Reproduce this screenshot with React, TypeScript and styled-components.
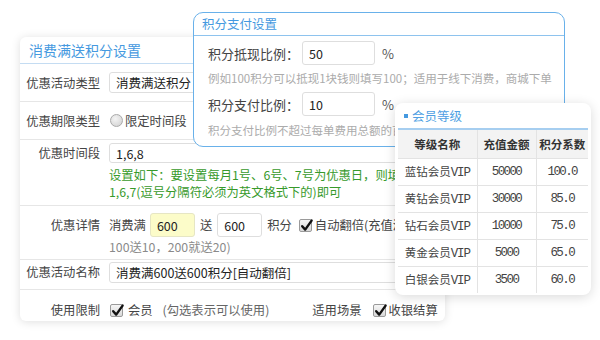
import React from "react";
import styled, { createGlobalStyle } from "styled-components";

const GlobalStyle = createGlobalStyle`
  html, body { margin: 0; padding: 0; background: #fff; }
  body { font-family: "Noto Sans CJK SC", "Noto Sans", sans-serif; color: #333; }
  * { box-sizing: border-box; }
`;

const Canvas = styled.div`
  position: relative;
  width: 600px;
  height: 340px;
  overflow: hidden;
  background: #fff;
`;

/* ---------- main window ---------- */
const MainPanel = styled.section`
  position: absolute;
  left: 20px;
  top: 37px;
  width: 425px;
  height: 284px;
  background: #fff;
  border-radius: 6px;
  box-shadow: 0 1px 10px rgba(0, 0, 0, 0.13);
  overflow: hidden;
  z-index: 1;
  font-size: 12.3px;
`;

const PanelTitle = styled.div`
  height: 27px;
  line-height: 26px;
  padding-left: 9px;
  font-size: 14px;
  color: #4599e0;
  border-bottom: 1px solid #c4dcf2;
`;

const Row = styled.div<{ $h?: number; $align?: string; $pt?: number; $last?: boolean }>`
  display: grid;
  grid-template-columns: 80px 1fr;
  column-gap: 9px;
  height: ${(p) => (p.$h ? `${p.$h}px` : "auto")};
  align-items: ${(p) => p.$align ?? "center"};
  padding-top: ${(p) => p.$pt ?? 0}px;
  border-bottom: ${(p) => (p.$last ? "none" : "1px solid #e6e6e6")};
  white-space: nowrap;
`;

const Label = styled.div<{ $lh?: number }>`
  text-align: right;
  color: #444;
  line-height: ${(p) => p.$lh ?? 20}px;
`;

const Field = styled.div<{ $column?: boolean }>`
  display: flex;
  flex-direction: ${(p) => (p.$column ? "column" : "row")};
  align-items: ${(p) => (p.$column ? "flex-start" : "center")};
  min-width: 0;
`;

const Inline = styled.div<{ $h?: number }>`
  display: flex;
  align-items: center;
  height: ${(p) => p.$h ?? 20}px;
  color: #444;
`;

const TextBox = styled.input<{ $w: number; $h: number; $yellow?: boolean; $ml?: number; $mr?: number }>`
  width: ${(p) => p.$w}px;
  height: ${(p) => p.$h}px;
  margin: 0 ${(p) => p.$mr ?? 0}px 0 ${(p) => p.$ml ?? 0}px;
  padding: 0 6px;
  font: inherit;
  font-size: 12.5px;
  color: #222;
  background: ${(p) => (p.$yellow ? "#fcfcc9" : "#fff")};
  border: 1px solid ${(p) => (p.$yellow ? "#e6e6c4" : "#dedede")};
  border-radius: 3px;
  outline: none;
  flex: none;
`;

const Hint = styled.div<{ $color: string; $mt?: number }>`
  color: ${(p) => p.$color};
  line-height: 17px;
  margin-top: ${(p) => p.$mt ?? 0}px;
`;

const Text = styled.span<{ $ml?: number; $color?: string }>`
  margin-left: ${(p) => p.$ml ?? 0}px;
  color: ${(p) => p.$color ?? "#444"};
  flex: none;
`;

const CheckBox = styled.span<{ $ml?: number }>`
  position: relative;
  display: inline-block;
  width: 13px;
  height: 13px;
  margin-left: ${(p) => p.$ml ?? 0}px;
  border: 1px solid #9a9a9a;
  border-radius: 2px;
  background: linear-gradient(#f6f6f6, #d9d9d9);
  flex: none;
  svg {
    position: absolute;
    left: 0px;
    top: -2px;
  }
`;

const Radio = styled.span<{ $ml?: number }>`
  display: inline-block;
  width: 13px;
  height: 13px;
  margin-left: ${(p) => p.$ml ?? 0}px;
  border: 1px solid #aaa;
  border-radius: 50%;
  background: radial-gradient(circle at 40% 35%, #f4f4f4, #cfcfcf);
  flex: none;
`;

const Check = ({ ml }: { ml?: number }) => (
  <CheckBox $ml={ml}>
    <svg width="14" height="15" viewBox="0 0 14 15">
      <path d="M2.2 8.2 L5.2 11.6 L11.6 2.6" fill="none" stroke="#111" strokeWidth="2.4" strokeLinecap="round" strokeLinejoin="round" />
    </svg>
  </CheckBox>
);

/* ---------- points payment window ---------- */
const PayWindow = styled.section`
  position: absolute;
  left: 193px;
  top: 12px;
  width: 372px;
  height: 135px;
  background: #fff;
  border: 1.5px solid #69b1ea;
  border-radius: 10px;
  overflow: hidden;
  z-index: 2;
  white-space: nowrap;
`;

const PayTitle = styled.div`
  height: 23px;
  line-height: 22px;
  padding-left: 8px;
  font-size: 12.5px;
  color: #4599e0;
  border-bottom: 1px solid #8ec3ee;
`;

const PayBody = styled.div`
  display: flex;
  flex-direction: column;
  padding: 5px 0 0 14px;
`;

const PayLine = styled.div<{ $mt?: number }>`
  display: flex;
  align-items: center;
  height: 24px;
  margin-top: ${(p) => p.$mt ?? 0}px;
  font-size: 13px;
  color: #444;
`;

const PayHint = styled.div<{ $mt: number }>`
  height: 16px;
  line-height: 16px;
  margin-top: ${(p) => p.$mt}px;
  font-size: 11.5px;
  color: #ababab;
`;

/* ---------- member level window ---------- */
const LevelWindow = styled.section`
  position: absolute;
  left: 395px;
  top: 103px;
  width: 196px;
  height: 192px;
  padding: 0 3px;
  background: #fff;
  border-radius: 8px;
  box-shadow: 0 2px 12px rgba(0, 0, 0, 0.15);
  z-index: 3;
`;

const LevelTitle = styled.div`
  display: flex;
  align-items: center;
  gap: 4px;
  height: 27px;
  padding-left: 6px;
  font-size: 12.5px;
  color: #4f9fe3;
  border-bottom: 2px solid #a6cef0;
`;

const Square = styled.span`
  width: 4px;
  height: 4px;
  background: #4599e0;
`;

const Table = styled.table`
  width: 190px;
  border-collapse: collapse;
  table-layout: fixed;
`;

const Th = styled.th<{ $w: number }>`
  width: ${(p) => p.$w}px;
  height: 28px;
  padding: 0;
  background: #f3f3f3;
  font-size: 11.5px;
  font-weight: 600;
  color: #333;
  text-align: center;
  border-left: 1px solid #e3e3e3;
  &:first-child { border-left: none; }
`;

const Td = styled.td<{ $num?: boolean }>`
  height: 27px;
  padding: 0;
  text-align: center;
  font-family: ${(p) => (p.$num ? `"Liberation Mono", monospace` : `"Noto Sans CJK SC", sans-serif`)};
  font-size: ${(p) => (p.$num ? 12.5 : 11.5)}px;
  letter-spacing: ${(p) => (p.$num ? "-1.6px" : "0")};
  color: #444;
  border-top: 1px solid #e3e3e3;
  border-left: 1px solid #e3e3e3;
  &:first-child { border-left: none; }
`;

const Vip = styled.span`
  font-family: "Liberation Mono", monospace;
  font-size: 12.5px;
  letter-spacing: -1.2px;
`;

const levels = [
  { name: "蓝钻会员", amount: "50000", rate: "100.0" },
  { name: "黄钻会员", amount: "30000", rate: "85.0" },
  { name: "钻石会员", amount: "10000", rate: "75.0" },
  { name: "黄金会员", amount: "5000", rate: "65.0" },
  { name: "白银会员", amount: "3500", rate: "60.0" },
];

export default function App() {
  return (
    <>
      <GlobalStyle />
      <Canvas>
        <MainPanel>
          <PanelTitle>消费满送积分设置</PanelTitle>
          <Row $h={38}>
            <Label>优惠活动类型</Label>
            <Field>
              <TextBox $w={300} $h={21} readOnly value="消费满送积分" />
            </Field>
          </Row>
          <Row $h={38}>
            <Label>优惠期限类型</Label>
            <Field>
              <Radio $ml={1} />
              <Text $ml={2}>限定时间段</Text>
            </Field>
          </Row>
          <Row $h={66} $align="start" $pt={3}>
            <Label>优惠时间段</Label>
            <Field $column>
              <TextBox $w={300} $h={20} readOnly value="1,6,8" />
              <Hint $color="#379a2b" $mt={3.5}>设置如下：要设置每月1号、6号、7号为优惠日，则填</Hint>
              <Hint $color="#379a2b">1,6,7(逗号分隔符必须为英文格式下的)即可</Hint>
            </Field>
          </Row>
          <Row $h={54} $align="start" $pt={7}>
            <Label $lh={24}>优惠详情</Label>
            <Field $column>
              <Inline $h={24}>
                <Text>消费满</Text>
                <TextBox $w={45} $h={24} $yellow $ml={4} readOnly value="600" />
                <Text $ml={5}>送</Text>
                <TextBox $w={45} $h={24} $ml={5} readOnly value="600" />
                <Text $ml={5}>积分</Text>
                <Check ml={7} />
                <Text $ml={3}>自动翻倍(充值满</Text>
              </Inline>
              <Hint $color="#8a8a8a" $mt={1.5}>100送10，200就送20)</Hint>
            </Field>
          </Row>
          <Row $h={30} $align="start" $pt={2}>
            <Label $lh={21}>优惠活动名称</Label>
            <Field>
              <TextBox $w={310} $h={21} readOnly value="消费满600送600积分[自动翻倍]" />
            </Field>
          </Row>
          <Row $align="start" $pt={10} $last>
            <Label>使用限制</Label>
            <Field>
              <Inline>
                <Check ml={1} />
                <Text $ml={5}>会员</Text>
                <Text $ml={10} $color="#666">(勾选表示可以使用)</Text>
                <Text $ml={43}>适用场景</Text>
                <Check ml={11} />
                <Text $ml={3}>收银结算</Text>
              </Inline>
            </Field>
          </Row>
        </MainPanel>

        <PayWindow>
          <PayTitle>积分支付设置</PayTitle>
          <PayBody>
            <PayLine>
              <span>积分抵现比例：</span>
              <TextBox $w={73} $h={24} $ml={3} readOnly value="50" />
              <Text $ml={7} $color="#555">%</Text>
            </PayLine>
            <PayHint $mt={5}>例如100积分可以抵现1块钱则填写100；适用于线下消费，商城下单</PayHint>
            <PayLine $mt={6}>
              <span>积分支付比例：</span>
              <TextBox $w={73} $h={24} $ml={3} readOnly value="10" />
              <Text $ml={7} $color="#555">%</Text>
            </PayLine>
            <PayHint $mt={6}>积分支付比例不超过每单费用总额的百分比</PayHint>
          </PayBody>
        </PayWindow>

        <LevelWindow>
          <LevelTitle>
            <Square />
            <span>会员等级</span>
          </LevelTitle>
          <Table>
            <thead>
              <tr>
                <Th $w={79}>等级名称</Th>
                <Th $w={59}>充值金额</Th>
                <Th $w={52}>积分系数</Th>
              </tr>
            </thead>
            <tbody>
              {levels.map((l) => (
                <tr key={l.name}>
                  <Td>
                    {l.name}
                    <Vip>VIP</Vip>
                  </Td>
                  <Td $num>{l.amount}</Td>
                  <Td $num>{l.rate}</Td>
                </tr>
              ))}
            </tbody>
          </Table>
        </LevelWindow>
      </Canvas>
    </>
  );
}
